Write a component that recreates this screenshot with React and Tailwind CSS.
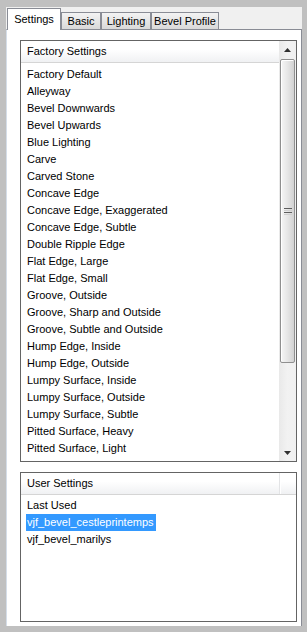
const factory = [
  "Factory Default",
  "Alleyway",
  "Bevel Downwards",
  "Bevel Upwards",
  "Blue Lighting",
  "Carve",
  "Carved Stone",
  "Concave Edge",
  "Concave Edge, Exaggerated",
  "Concave Edge, Subtle",
  "Double Ripple Edge",
  "Flat Edge, Large",
  "Flat Edge, Small",
  "Groove, Outside",
  "Groove, Sharp and Outside",
  "Groove, Subtle and Outside",
  "Hump Edge, Inside",
  "Hump Edge, Outside",
  "Lumpy Surface, Inside",
  "Lumpy Surface, Outside",
  "Lumpy Surface, Subtle",
  "Pitted Surface, Heavy",
  "Pitted Surface, Light",
  "Pitted Surface, Medium",
];

function Header({ children, divider }) {
  return (
    <div className="flex h-[22px] shrink-0 border-b border-[#d5d5d5] bg-gradient-to-b from-white from-40% to-[#f0f1f3]">
      <div className="flex flex-1 items-center pl-[6px]">{children}</div>
      {divider && (
        <div className="w-[17px] border-l border-[#e3e4e6] shadow-[inset_1px_0_0_#ffffff]" />
      )}
    </div>
  );
}

function Scrollbar() {
  return (
    <div className="flex w-[17px] shrink-0 flex-col bg-gradient-to-r from-[#e9e9e9] via-[#f2f2f2] to-[#f0f0f0]">
      <div className="flex h-[17px] shrink-0 items-center justify-center">
        <svg width="7" height="4" viewBox="0 0 7 4">
          <path d="M3.5 0 L7 4 L0 4 Z" fill="#303030" />
        </svg>
      </div>
      <div className="mx-[1px] mt-[1px] flex h-[304px] items-center justify-center rounded-[2px] border border-[#8f8f8f] bg-gradient-to-r from-[#f6f6f6] via-[#e6e6e6] to-[#d2d2d2] shadow-[inset_1px_1px_0_#ffffff]">
        <div className="flex flex-col gap-[1px]">
          <div className="h-[1px] w-[8px] bg-[#5e5e5e]" />
          <div className="h-[1px] w-[8px] bg-[#cfcfcf]" />
          <div className="h-[1px] w-[8px] bg-[#5e5e5e]" />
          <div className="h-[1px] w-[8px] bg-[#cfcfcf]" />
        </div>
      </div>
      <div className="flex-1" />
      <div className="flex h-[17px] shrink-0 items-center justify-center">
        <svg width="7" height="4" viewBox="0 0 7 4">
          <path d="M0 0 L7 0 L3.5 4 Z" fill="#303030" />
        </svg>
      </div>
    </div>
  );
}

export default function App() {
  return (
    <div
      className="flex h-[632px] w-[307px] flex-col bg-[#c0c0c0] pb-[6px] pl-[6px] pr-[5px] pt-[7px] text-[11px] text-black"
      style={{ fontFamily: '"Liberation Sans", Arial, sans-serif' }}
    >
      <div className="flex flex-1 flex-col bg-[#f0f0f0]">
        {/* Tabs */}
        <div className="flex h-[22px] shrink-0 items-end pl-[1px]">
          <div className="relative z-10 -mb-px flex h-[22px] w-[54px] justify-center border border-b-0 border-[#898c95] bg-white pt-[4px] leading-[13px]">
            Settings
          </div>
          <div className="flex h-[17px] w-[40px] items-center justify-center border border-b-0 border-[#898c95] bg-gradient-to-b from-[#f3f3f3] to-[#d9d9d9] leading-[13px]">
            Basic
          </div>
          <div className="flex h-[17px] w-[50px] items-center justify-center border border-b-0 border-[#898c95] bg-gradient-to-b from-[#f3f3f3] to-[#d9d9d9] leading-[13px]">
            Lighting
          </div>
          <div className="flex h-[17px] w-[68px] items-center justify-center border border-b-0 border-[#898c95] bg-gradient-to-b from-[#f3f3f3] to-[#d9d9d9] leading-[13px]">
            Bevel Profile
          </div>
        </div>

        {/* Panel */}
        <div className="flex flex-1 flex-col border-l border-r border-t border-l-[#d4dde8] border-r-[#898c95] border-t-[#898c95] bg-white pb-[4px] pl-[13px] pr-[4px] pt-[10px]">
          {/* Factory list */}
          <div className="flex h-[422px] shrink-0 border border-[#646464]">
            <div className="flex flex-1 flex-col overflow-hidden">
              <Header>Factory Settings</Header>
              <div className="flex flex-col overflow-hidden pt-[3px]">
                {factory.map((f) => (
                  <div key={f} className="h-[17px] shrink-0 whitespace-nowrap pl-[6px] leading-[17px]">
                    {f}
                  </div>
                ))}
              </div>
            </div>
            <Scrollbar />
          </div>

          {/* User list */}
          <div className="mt-[10px] flex h-[150px] shrink-0 flex-col border border-[#646464]">
            <Header divider>User Settings</Header>
            <div className="flex flex-col pt-[2px]">
              <div className="h-[17px] whitespace-nowrap pl-[6px] leading-[17px]">Last Used</div>
              <div className="pl-[5px]">
                <div className="h-[17px] w-[130px] whitespace-nowrap bg-[#3399ff] pl-[1px] leading-[17px] text-white">
                  vjf_bevel_cestleprintemps
                </div>
              </div>
              <div className="h-[17px] whitespace-nowrap pl-[6px] leading-[17px]">vjf_bevel_marilys</div>
            </div>
          </div>
        </div>
      </div>
    </div>
  );
}
